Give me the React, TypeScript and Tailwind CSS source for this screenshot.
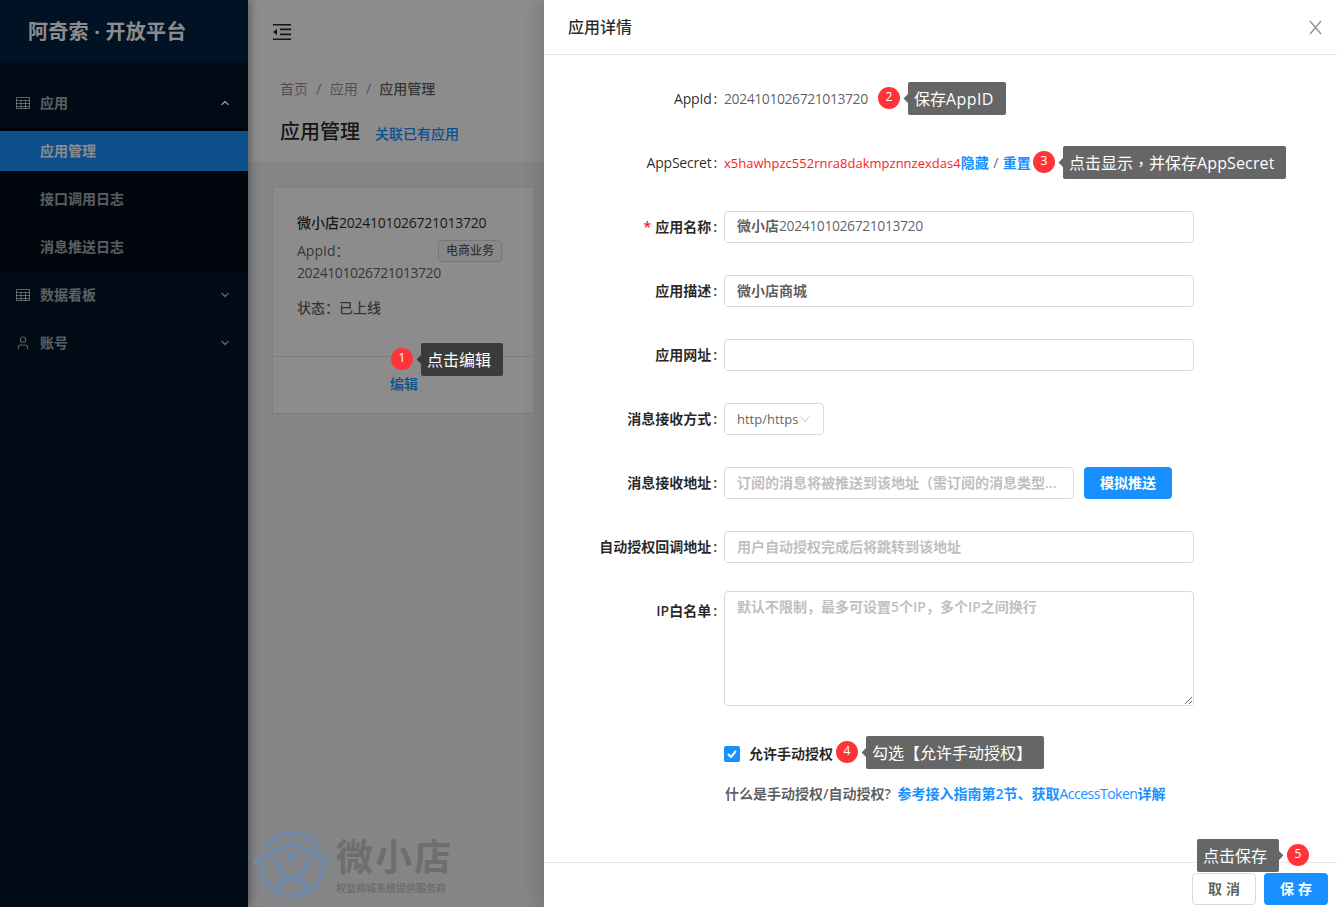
import React from 'react';
import { ChevronDown, ChevronUp, User } from 'lucide-react';

const Num: React.FC<{ children: React.ReactNode; tight?: boolean }> = ({ children, tight }) => (
  <span className={tight ? 'tracking-[-0.26px]' : 'font-normal tracking-[-0.44px]'}>{children}</span>
);

const TableIcon: React.FC = () => (
  <svg width="14" height="12" viewBox="0 0 14 12" fill="none" stroke="currentColor" strokeWidth="1">
    <rect x="0.5" y="0.5" width="13" height="11" />
    <path d="M0 3.5h14M0 6.5h14M0 9.5h14M5 3v9M9.5 3v9" />
  </svg>
);

const MenuItem: React.FC<{ icon: React.ReactNode; label: string; open?: boolean }> = ({ icon, label, open }) => (
  <div className="py-1">
    <div className="flex h-10 items-center pl-4 pr-[17px] text-sm font-bold text-white/65">
      <span className="flex w-6 items-center">{icon}</span>
      <span className="flex-1">{label}</span>
      {open ? <ChevronUp size={12} strokeWidth={3} className="text-white" /> : <ChevronDown size={12} strokeWidth={3} />}
    </div>
  </div>
);

const SubItem: React.FC<{ label: string; active?: boolean }> = ({ label, active }) => (
  <div className="py-1">
    <div className={`flex h-10 items-center pl-10 text-sm font-bold ${active ? 'bg-[#1890ff] text-white' : 'text-white/65'}`}>{label}</div>
  </div>
);

const Sidebar: React.FC = () => (
  <aside className="z-10 flex w-[248px] shrink-0 flex-col bg-[#001529] shadow-[2px_0_8px_rgba(0,0,0,0.35)]">
    <div className="flex h-[63px] items-center bg-[#002140] pl-7 text-[20px] font-bold tracking-[0.25px] text-white">阿奇索 · 开放平台</div>
    <nav className="pt-4">
      <MenuItem icon={<TableIcon />} label="应用" open />
      <div className="bg-[#000c17]">
        <SubItem label="应用管理" active />
        <SubItem label="接口调用日志" />
        <SubItem label="消息推送日志" />
      </div>
      <MenuItem icon={<TableIcon />} label="数据看板" />
      <MenuItem icon={<User size={16} strokeWidth={1.6} className="-ml-px" />} label="账号" />
    </nav>
  </aside>
);

const Main: React.FC = () => (
  <main className="relative min-w-0 flex-1 bg-[#f0f2f5]">
    <header className="flex h-16 items-center bg-white pl-[25px] shadow-[0_1px_4px_rgba(0,21,41,0.08)]">
      <svg width="18" height="16" viewBox="0 0 18 16" fill="currentColor" className="text-[#262626]">
        <path d="M0 0h18v1.6H0zM7 4.6h11v1.6H7zM7 9.6h11v1.6H7zM0 14.4h18V16H0zM4 5v6L0 8z" />
      </svg>
    </header>
    <section className="h-[98px] bg-white pl-8 pt-4">
      <div className="flex h-[18px] items-center gap-[8.25px] text-sm text-black/45">
        <span>首页</span>
        <span>/</span>
        <span>应用</span>
        <span>/</span>
        <span className="font-medium text-black/65">应用管理</span>
      </div>
      <div className="mt-[19px] flex items-center gap-[15px]">
        <h1 className="text-[20px] font-medium text-black/85">应用管理</h1>
        <a className="mt-[3px] text-sm font-medium text-[#1890ff]">关联已有应用</a>
      </div>
    </section>
    <div className="pl-6 pt-[25px]">
      <div className="h-[227px] w-[263px] border border-[#e8e8e8] bg-white">
        <div className="h-[168px] px-6 pt-6 text-sm">
          <div className="font-medium leading-[22px] text-black/85">
            微小店<Num tight>2024101026721013720</Num>
          </div>
          <div className="mt-[6px] flex items-start justify-between text-black/65">
            <span className="leading-[22px]">AppId：</span>
            <span className="mr-2 flex h-[22px] w-16 items-center justify-center rounded border border-[#d9d9d9] bg-[#fafafa] text-xs font-medium">电商业务</span>
          </div>
          <div className="leading-[22px] text-black/65">
            <Num>2024101026721013720</Num>
          </div>
          <div className="mt-[13px] font-medium leading-[22px] text-black/65">状态：已上线</div>
        </div>
        <div className="flex h-[57px] items-center justify-center border-t border-[#e8e8e8] pl-px">
          <a className="-mt-[3px] text-sm font-medium text-[#1890ff]">编辑</a>
        </div>
      </div>
    </div>
  </main>
);

// watermark sits above the mask in the reference
const Watermark: React.FC = () => (
  <div className="absolute left-[252px] top-[832px] z-[15] flex items-start">
    <svg width="80" height="66" viewBox="0 0 80 66" fill="none" stroke="#728aa9" strokeWidth="5">
      <path d="M13 17A31 31 0 0 1 67 17" strokeWidth="4" />
      <path d="M9 33A31 31 0 0 0 71 33" strokeWidth="4" />
      <path d="M2 31L40 11l38 20" />
      <path d="M24 27c1 11 8 19 16 19s15-8 16-19" />
      <path d="M24 62c1-9 8-16 16-16s15 7 16 16" />
      <rect x="35" y="21" width="10" height="9" fill="#728aa9" stroke="none" />
    </svg>
    <div className="ml-[4px] pt-[3px]">
      <div className="text-[37px] font-bold leading-[44px] tracking-[2px] text-[#6e6e6f]">微小店</div>
      <div className="mt-[3px] text-[10px] font-bold leading-[13px] text-[#6e6e6f]">权益商城系统提供服务商</div>
    </div>
  </div>
);

const Note: React.FC<{ n: number; className: string; dark?: boolean; right?: boolean; children: React.ReactNode }> = ({ n, className, dark, right, children }) => {
  const bg = dark ? 'bg-[#3b3b3b]' : 'bg-[#666666]';
  const badge = (
    <span className="mb-[1px] flex h-[22px] w-[22px] shrink-0 items-center justify-center rounded-full bg-[#ff3338] pb-[2px] text-xs text-white">{n}</span>
  );
  return (
    <div className={`absolute z-30 flex items-center ${className}`}>
      {!right && badge}
      <div className={`relative flex h-[33px] items-center whitespace-nowrap rounded-[2px] pl-[6px] pr-3 text-base text-white ${bg} ${right ? 'mr-[8px]' : 'ml-[8px]'}`}>
        <span className={`absolute top-[13px] h-[7px] w-[7px] rotate-45 ${bg} ${right ? '-right-[3px]' : '-left-[3px]'}`} />
        {children}
      </div>
      {right && badge}
    </div>
  );
};

const Row: React.FC<{ label: React.ReactNode; required?: boolean; plain?: boolean; tall?: boolean; children: React.ReactNode }> = ({ label, required, plain, tall, children }) => (
  <div className={`mb-8 flex text-sm ${tall ? '-mt-1 items-start' : 'min-h-8 items-center'}`}>
    <label className={`flex w-[173px] shrink-0 justify-end whitespace-nowrap text-black/85 ${plain ? 'tracking-[-0.2px]' : 'font-semibold'} ${tall ? 'pt-[9px] leading-[22px]' : ''}`}>
      {required && <span className="mr-1 text-[#f5222d]">*</span>}
      {label}
      <span className="ml-[2px]">:</span>
    </label>
    <div className="ml-[7px] flex min-w-0 flex-1 items-center">{children}</div>
  </div>
);

const inputCls =
  'h-8 rounded border border-[#d9d9d9] bg-white px-3 pb-[2px] text-sm font-semibold text-black/65 outline-none placeholder:text-[#bfbfbf] text-ellipsis';

const Drawer: React.FC = () => (
  <div className="absolute right-0 top-0 z-20 flex h-full w-[793px] flex-col bg-white shadow-[-6px_0_16px_rgba(0,0,0,0.12)]">
    <div className="flex h-[55px] shrink-0 items-center justify-between border-b border-[#e8e8e8] pl-6 pr-[15px]">
      <h2 className="text-base font-medium text-black/85">应用详情</h2>
      <svg width="13" height="15" viewBox="0 0 13 15" fill="none" stroke="#8c8c8c" strokeWidth="1.2">
        <path d="M1 1l11 13M12 1L1 14" />
      </svg>
    </div>
    <div className="flex-1 pt-7">
      <Row label="AppId" plain>
        <span className="text-black/65"><Num>2024101026721013720</Num></span>
      </Row>
      <Row label="AppSecret" plain>
        <span className="whitespace-nowrap text-[13px] tracking-[0.01px] text-[#ff1a1a]">x5hawhpzc552rnra8dakmpznnzexdas4</span>
        <a className="font-semibold text-[#1890ff]">隐藏</a>
        <span className="mx-[4.5px] text-black/65">/</span>
        <a className="font-semibold text-[#1890ff]">重置</a>
      </Row>
      <Row label="应用名称" required>
        <div className={`${inputCls} flex w-[470px] items-center`}>
          微小店<Num>2024101026721013720</Num>
        </div>
      </Row>
      <Row label="应用描述">
        <input className={`${inputCls} w-[470px]`} defaultValue="微小店商城" />
      </Row>
      <Row label="应用网址">
        <input className={`${inputCls} w-[470px]`} />
      </Row>
      <Row label="消息接收方式">
        <div className="flex h-8 w-[100px] items-center rounded border border-[#d9d9d9] pl-3 text-[13px] text-black/65">
          http/https
          <svg width="10" height="6" viewBox="0 0 10 6" fill="none" stroke="#bfbfbf" className="ml-[2px]">
            <path d="M0.5 0.5L5 5.5l4.5-5" />
          </svg>
        </div>
      </Row>
      <Row label="消息接收地址">
        <input className={`${inputCls} w-[350px]`} placeholder="订阅的消息将被推送到该地址（需订阅的消息类型..." />
        <button className="ml-[10px] h-8 w-[88px] rounded bg-[#1890ff] text-sm font-bold text-white">模拟推送</button>
      </Row>
      <Row label="自动授权回调地址">
        <input className={`${inputCls} w-[470px]`} placeholder="用户自动授权完成后将跳转到该地址" />
      </Row>
      <Row label="IP白名单" tall>
        <textarea
          className="h-[115px] w-[470px] rounded border border-[#d9d9d9] px-3 py-1 text-sm font-semibold leading-[22px] outline-none placeholder:text-[#bfbfbf]"
          placeholder="默认不限制，最多可设置5个IP，多个IP之间换行"
        />
      </Row>
      <div className="mt-[38px] flex flex-col gap-[20px] pl-[180px] text-sm font-semibold">
        <div className="flex items-center gap-[9px] text-black/85">
          <span className="flex h-4 w-4 items-center justify-center rounded-[2px] bg-[#1890ff]">
            <svg width="10" height="8" viewBox="0 0 10 8" fill="none" stroke="white" strokeWidth="2">
              <path d="M1 4l3 3 5-6" />
            </svg>
          </span>
          允许手动授权
        </div>
        <div className="pl-px text-black/65">
          什么是手动授权/自动授权?{' '}
          <a className="ml-[3px] text-[#1890ff]">
            参考接入指南第2节、获取<span className="font-normal tracking-[-0.5px]">AccessToken</span>详解
          </a>
        </div>
      </div>
    </div>
    <div className="flex h-[45px] shrink-0 items-start justify-end gap-2 border-t border-[#e8e8e8] pr-[9px] pt-[10px] text-sm font-bold">
      <button className="h-8 w-16 rounded border border-[#d9d9d9] bg-white pl-1 tracking-[4px] text-black/65">取消</button>
      <button className="h-8 w-16 rounded bg-[#1890ff] pl-1 tracking-[4px] text-white">保存</button>
    </div>
  </div>
);

export default function App() {
  return (
    <div className="relative flex h-screen w-full overflow-hidden font-['Open_Sans','Noto_Sans_CJK_SC',sans-serif]">
      <Sidebar />
      <Main />
      <div className="absolute inset-0 z-10 bg-black/45" />
      <Watermark />
      <Drawer />
      <Note n={1} dark className="left-[391px] top-[343px]">点击编辑</Note>
      <Note n={2} className="left-[878px] top-[82px]">保存<span className="tracking-[0.4px]">AppID</span></Note>
      <Note n={3} className="left-[1033px] top-[146px]">
        点击显示<span className="font-['Noto_Sans_CJK_TC']">，</span>并保存<span className="tracking-[0.12px]">AppSecret</span>
      </Note>
      <Note n={4} className="left-[836px] top-[736px]">勾选【允许手动授权】</Note>
      <Note n={5} right className="left-[1197px] top-[839px]">点击保存</Note>
    </div>
  );
}
